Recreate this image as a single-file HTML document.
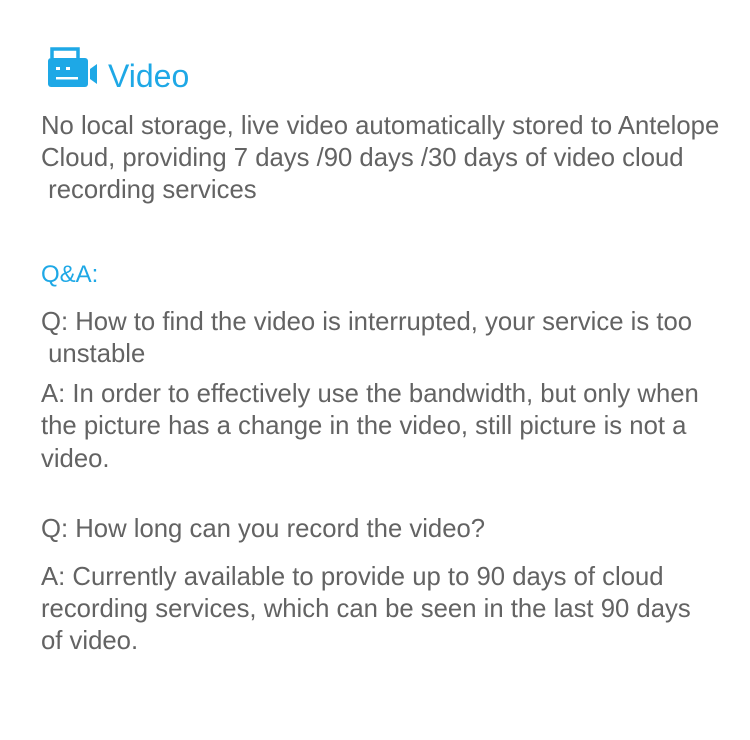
<!DOCTYPE html>
<html><head><meta charset="utf-8"><style>
body{margin:0;width:750px;height:740px;background:#fff;font-family:"Liberation Sans",sans-serif;color:#636363;position:relative;overflow:hidden}
.l{position:absolute;left:41px;font-size:25.7px;white-space:nowrap;line-height:32px}
.b{color:#1ea8e6}
</style></head><body>
<svg style="position:absolute;left:46px;top:46px" width="54" height="44" viewBox="0 0 54 44">
<path d="M6 12 V3 H32 V12" fill="none" stroke="#1ea8e6" stroke-width="3.5"/>
<rect x="2" y="12" width="40" height="29" rx="3" fill="#1ea8e6"/>
<rect x="10" y="21" width="4" height="3" fill="#fff"/>
<rect x="20" y="21" width="4" height="3" fill="#fff"/>
<rect x="10" y="31" width="22" height="2.5" fill="#fff"/>
<path d="M44 23 L51 18 V38 L44 33 Z" fill="#1ea8e6"/>
</svg>
<div class="l b" style="left:108px;top:57px;font-size:32px;line-height:38px">Video</div>
<div class="l" style="top:110px">No local storage, live video automatically stored to Antelope</div>
<div class="l" style="top:142px">Cloud, providing 7 days /90 days /30 days of video cloud</div>
<div class="l" style="top:174px">&nbsp;recording services</div>
<div class="l b" style="top:259px;font-size:24px">Q&amp;A:</div>
<div class="l" style="top:306px">Q: How to find the video is interrupted, your service is too</div>
<div class="l" style="top:338px">&nbsp;unstable</div>
<div class="l" style="top:378px">A: In order to effectively use the bandwidth, but only when</div>
<div class="l" style="top:410px">the picture has a change in the video, still picture is not a</div>
<div class="l" style="top:443px">video.</div>
<div class="l" style="top:513px">Q: How long can you record the video?</div>
<div class="l" style="top:561px">A: Currently available to provide up to 90 days of cloud</div>
<div class="l" style="top:593px">recording services, which can be seen in the last 90 days</div>
<div class="l" style="top:625px">of video.</div>
</body></html>
